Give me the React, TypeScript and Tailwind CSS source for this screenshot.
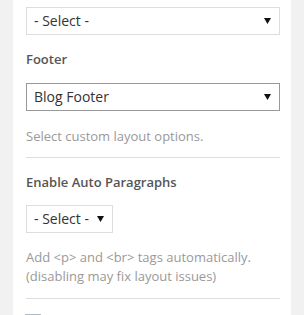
import React from "react";

function Arrow() {
  return (
    <svg width="7" height="7" viewBox="0 0 7 7" className="shrink-0">
      <polygon points="0,0 7,0 3.5,6" fill="#111" />
    </svg>
  );
}

function Select({ label, width, dark, text }: { label: string; width?: string; dark?: boolean; text: string }) {
  return (
    <div
      className={`flex h-[28px] items-center justify-between bg-white pl-[7px] pr-[8px] ${text} text-[#333] border ${dark ? "border-[#999]" : "border-[#ddd]"} ${width ?? "w-full"}`}
    >
      <span className="leading-none">{label}</span>
      <Arrow />
    </div>
  );
}

export default function App() {
  return (
    <div
      className="flex h-[315px] w-[304px] overflow-hidden bg-[#f1f1f1]"
      style={{ fontFamily: '"Open Sans", sans-serif' }}
    >
      <div className="ml-[13px] w-[278px] shrink-0 bg-white pl-[13px] pr-[11px] pt-[7px]">
        <Select label="- Select -" text="text-[14px]" />
        <div className="mt-[14px] h-[20px] text-[13px] font-semibold leading-[20px] text-[#555]">Footer</div>
        <div className="mt-[14px]">
          <Select label="Blog Footer" dark text="text-[14px]" />
        </div>
        <div className="mt-[15px] h-[20px] text-[13px] leading-[20px] text-[#999]">Select custom layout options.</div>
        <div className="mt-[11px] h-px bg-[#ddd]" />
        <div className="mt-[14px] h-[20px] text-[13px] font-semibold leading-[20px] text-[#555]">Enable Auto Paragraphs</div>
        <div className="mt-[13px]">
          <Select label="- Select -" width="w-[87px]" text="text-[14px]" />
        </div>
        <div className="mt-[15px] text-[13px] leading-[19px] text-[#999]">
          <div>Add &lt;p&gt; and &lt;br&gt; tags automatically.</div>
          <div>(disabling may fix layout issues)</div>
        </div>
        <div className="mt-[12px] h-px bg-[#ddd]" />
        <div className="ml-[-1px] mt-[15px] h-[16px] w-[16px] border border-[#b4b9be] bg-white" />
      </div>
    </div>
  );
}
